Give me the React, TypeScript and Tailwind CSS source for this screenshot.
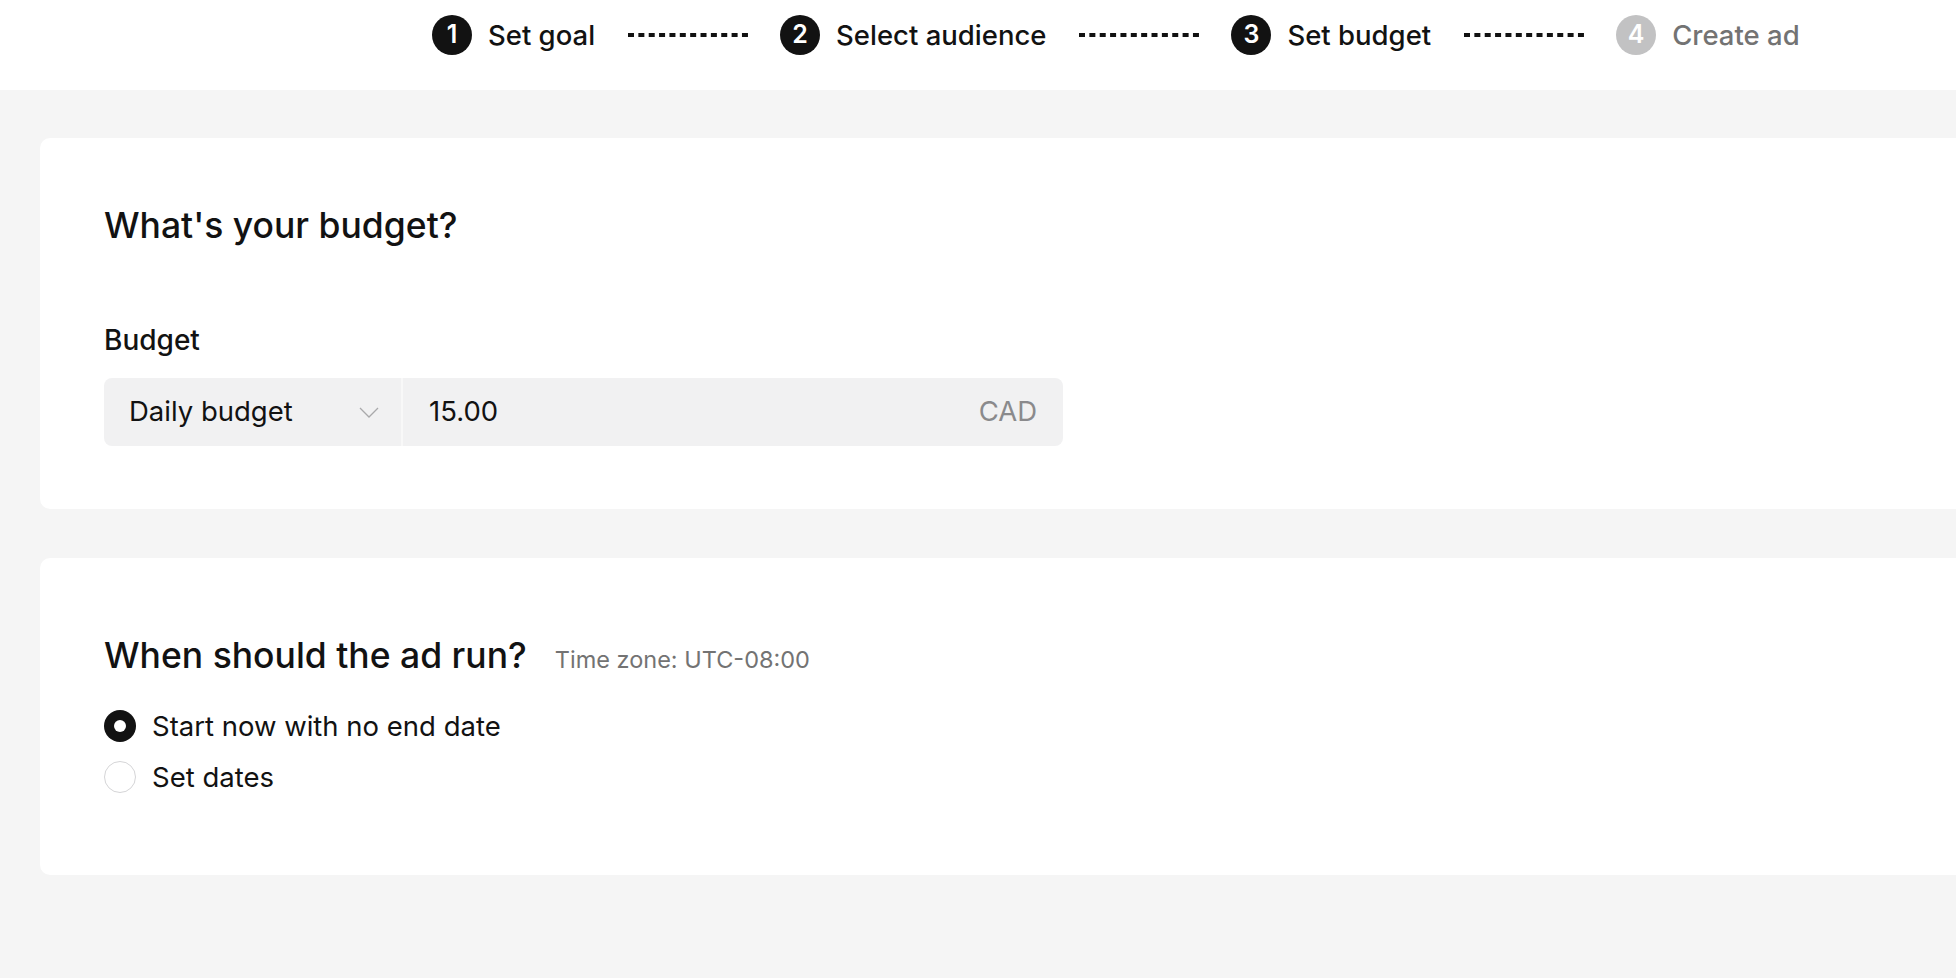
import React from "react";

const steps = [
  { n: 1, label: "Set goal", active: true },
  { n: 2, label: "Select audience", active: true },
  { n: 3, label: "Set budget", active: true },
  { n: 4, label: "Create ad", active: false },
];

function Dashes() {
  return (
    <svg width="120" height="4" viewBox="0 0 120 4" className="ml-[33px] mr-[32px] shrink-0" aria-hidden>
      <line x1="0" y1="2" x2="120" y2="2" stroke="#121212" strokeWidth="4" strokeDasharray="6 4.36" />
    </svg>
  );
}

function Stepper() {
  return (
    <header className="flex h-[90px] items-center bg-white pb-[20px] pl-[432px]">
      {steps.map((step, index) => (
        <React.Fragment key={step.n}>
          {index > 0 && <Dashes />}
          <div className="flex items-center gap-[16px]">
            <span
              className={
                step.active
                  ? "flex h-[40px] w-[40px] items-center justify-center rounded-full bg-[#121212] text-[25px] font-semibold text-white"
                  : "flex h-[40px] w-[40px] items-center justify-center rounded-full bg-[#c2c2c3] text-[25px] font-semibold text-white"
              }
            >
              {step.n}
            </span>
            <span
              className={
                step.active
                  ? "text-[27.5px] font-medium leading-[34px] text-[#121212]"
                  : "text-[27.5px] font-medium leading-[34px] text-[#737373]"
              }
            >
              {step.label}
            </span>
          </div>
        </React.Fragment>
      ))}
    </header>
  );
}

function Chevron() {
  return (
    <svg width="20" height="11" viewBox="0 0 20 11" fill="none" aria-hidden>
      <polyline points="1,1 10,10 19,1" stroke="#a9a9ab" strokeWidth="1.3" />
    </svg>
  );
}

function Radio({ checked, label }: { checked: boolean; label: string }) {
  return (
    <label className="flex h-[40px] items-center gap-[16px]">
      {checked ? (
        <span className="flex h-[32px] w-[32px] items-center justify-center rounded-full bg-[#121212]">
          <span className="h-[12px] w-[12px] rounded-full bg-white" />
        </span>
      ) : (
        <span className="h-[32px] w-[32px] rounded-full border-[1.5px] border-[#d5d5d7] bg-white" />
      )}
      <span className="text-[27.5px] leading-[34px] text-[#121212]">{label}</span>
    </label>
  );
}

export default function App() {
  return (
    <div
      className="min-h-[978px] overflow-hidden bg-[#f5f5f5] text-[#121212]"
      style={{ fontFamily: 'Inter, "Noto Sans", sans-serif' }}
    >
      <Stepper />

      <main className="flex flex-col gap-[49px] pl-[40px] pt-[48px]">
        {/* Budget card */}
        <section className="rounded-l-[10px] bg-white pb-[63px] pl-[64px] pt-[66px]">
          <h2 className="text-[35.5px] font-medium leading-[44px]">What's your budget?</h2>
          <div className="mt-[75px] text-[28px] font-medium leading-[34px]">Budget</div>
          <div className="mt-[21px] flex h-[68px] w-[959px]">
            <button className="flex w-[297px] items-center justify-between rounded-l-[8px] bg-[#f1f1f2] pl-[25px] pr-[22px]">
              <span className="text-[27.5px] text-[#121212]">Daily budget</span>
              <Chevron />
            </button>
            <div className="w-[2px] bg-[#f8f8f8]" />
            <div className="flex flex-1 items-center justify-between rounded-r-[8px] bg-[#f1f1f2] pl-[26px] pr-[26px]">
              <span className="text-[27.5px] text-[#121212]">15.00</span>
              <span className="text-[27.5px] text-[#8a8a8c]">CAD</span>
            </div>
          </div>
        </section>

        {/* Schedule card */}
        <section className="rounded-l-[10px] bg-white pb-[78px] pl-[64px] pt-[76px]">
          <div className="flex items-baseline gap-[28px]">
            <h2 className="text-[35.5px] font-medium leading-[44px]">When should the ad run?</h2>
            <span className="text-[23.5px] text-[#737373]">Time zone: UTC-08:00</span>
          </div>
          <div className="mt-[28px] flex flex-col gap-[11px]">
            <Radio checked label="Start now with no end date" />
            <Radio checked={false} label="Set dates" />
          </div>
        </section>
      </main>
    </div>
  );
}
